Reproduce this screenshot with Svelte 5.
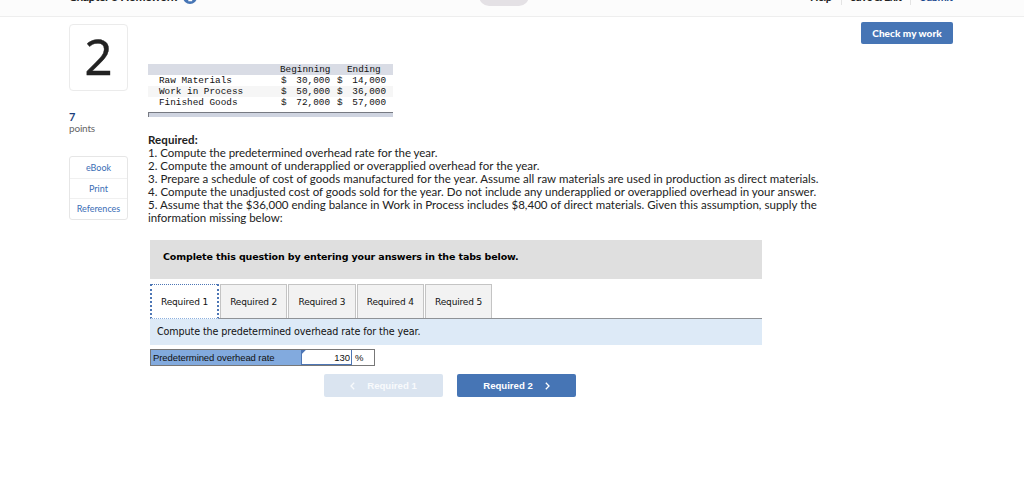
<script>
  let active = $state(0);
  let rate = $state('130');

  const inventory = [
    { name: 'Raw Materials', beginning: '30,000', ending: '14,000' },
    { name: 'Work in Process', beginning: '50,000', ending: '36,000' },
    { name: 'Finished Goods', beginning: '72,000', ending: '57,000' }
  ];

  // spacing is the tracking of each line, in px
  const requirements = [
    { text: '1. Compute the predetermined overhead rate for the year.', spacing: -0.05 },
    { text: '2. Compute the amount of underapplied or overapplied overhead for the year.', spacing: 0.01 },
    { text: '3. Prepare a schedule of cost of goods manufactured for the year. Assume all raw materials are used in production as direct materials.', spacing: 0.03 },
    { text: '4. Compute the unadjusted cost of goods sold for the year. Do not include any underapplied or overapplied overhead in your answer.', spacing: 0.02 },
    { text: '5. Assume that the $36,000 ending balance in Work in Process includes $8,400 of direct materials. Given this assumption, supply the', spacing: 0.02 },
    { text: 'information missing below:', spacing: -0.03 }
  ];

  const tabs = ['Required 1', 'Required 2', 'Required 3', 'Required 4', 'Required 5'];
</script>

<header class="topbar">
  <div class="title">
    <span>Chapter 3 Homework</span>
    <svg width="14" height="14" viewBox="0 0 14 14">
      <circle cx="7" cy="7" r="7" fill="#4675b5" />
      <path d="M5.5 6H7.5V10.5M5.3 10.5H9.2" stroke="#fff" stroke-width="1.5" fill="none" />
      <circle cx="7" cy="3.6" r="1" fill="#fff" />
    </svg>
  </div>
  <div class="pill"></div>
  <nav>
    <span>Help</span>
    <span>Save &amp; Exit</span>
    <span class="submit">Submit</span>
  </nav>
</header>

<main>
  <aside>
    <div class="number">2</div>
    <p class="score">7</p>
    <p class="points">points</p>
    <div class="links">
      <a href="#ebook">eBook</a>
      <a href="#print">Print</a>
      <a href="#references">References</a>
    </div>
  </aside>

  <section class="question">
    <div class="inventory">
      <div class="row head">
        <span></span><span>Beginning</span><span class="ending">Ending</span>
      </div>
      {#each inventory as item}
        <div class="row">
          <span class="name">{item.name}</span>
          <span class="amount"><i>$</i>{item.beginning}</span>
          <span class="amount"><i>$</i>{item.ending}</span>
        </div>
      {/each}
      <div class="rule"></div>
    </div>

    <div class="required">
      <b>Required:</b>
      {#each requirements as line}
        <div style="letter-spacing: {line.spacing}px">{line.text}</div>
      {/each}
    </div>

    <div class="work">
      <div class="banner">Complete this question by entering your answers in the tabs below.</div>
      <div class="tabs">
        {#each tabs as tab, i}
          <button class:active={active === i} onclick={() => (active = i)}>{tab}</button>
        {/each}
      </div>
      <div class="prompt">Compute the predetermined overhead rate for the year.</div>
      <div class="answer">
        <label for="rate">Predetermined overhead rate</label>
        <div class="field"><input id="rate" bind:value={rate} /></div>
        <span class="unit">%</span>
      </div>
      <div class="pager">
        <button disabled>
          <svg width="5" height="8" viewBox="0 0 5 8"><path d="M4.2 0.8L1 4L4.2 7.2" /></svg>
          <span>Required 1</span>
        </button>
        <button>
          <span>Required 2</span>
          <svg width="5" height="8" viewBox="0 0 5 8"><path d="M0.8 0.8L4 4L0.8 7.2" /></svg>
        </button>
      </div>
    </div>
  </section>

  <button class="check">Check my work</button>
</main>

<style>
  :global(body) {
    background: #fff;
    font-family: Lato, sans-serif;
    color: #222;
    overflow: hidden;
  }

  button {
    font: inherit;
    border: 0;
    padding: 0;
    white-space: nowrap;
  }

  p {
    margin: 0;
  }

  .topbar {
    box-sizing: border-box;
    height: 17px;
    background: #fcfcfc;
    border-bottom: 1px solid #eee;
    overflow: hidden;
    display: grid;
    grid-template-columns: 410px 50px 1fr;
    padding-left: 69px;
    font-size: 12px;
    line-height: 14px;
    font-weight: 700;
  }

  .title {
    display: flex;
    gap: 5px;
    margin-top: -10px;
    height: 14px;
    letter-spacing: -0.4px;
  }

  .title span {
    width: 109px;
    line-height: 13px;
    white-space: nowrap;
  }

  .pill {
    height: 20px;
    margin-top: -14px;
    border-radius: 10px;
    background: #e4e1e5;
  }

  nav {
    display: flex;
    margin: -10px 0 0 281px;
    height: 15px;
    font-size: 11px;
    line-height: 13px;
    letter-spacing: -0.4px;
  }

  nav span {
    box-sizing: border-box;
    border-right: 1px solid #e4e4e4;
    white-space: nowrap;
    padding-right: 9px;
    margin-right: 9px;
  }

  nav .submit {
    color: #1d4b8f;
    border: 0;
  }

  main {
    display: flex;
    align-items: flex-start;
    padding-left: 69px;
  }

  aside {
    width: 59px;
    margin-top: 7px;
  }

  .number {
    box-sizing: border-box;
    height: 67px;
    border: 1px solid #ebebeb;
    border-radius: 4px;
    font-family: "Noto Sans", sans-serif;
    font-size: 49px;
    line-height: 63px;
    text-align: center;
    -webkit-text-stroke: 0.4px #222;
  }

  .score {
    margin-top: 19px;
    font-size: 11px;
    line-height: 13px;
    color: #1d3f7d;
    font-weight: 700;
  }

  .points {
    font-size: 10px;
    line-height: 11px;
    letter-spacing: -0.2px;
    color: #666;
  }

  .links {
    box-sizing: border-box;
    height: 64px;
    margin-top: 22px;
    border: 1px solid #e6e6e6;
    border-radius: 3px;
    display: grid;
    grid-template-rows: 21px 20px 21px;
  }

  .links a {
    display: flex;
    align-items: center;
    justify-content: center;
    font-size: 9px;
    line-height: 10px;
    color: #3a6db5;
    text-decoration: none;
  }

  .links a + a {
    border-top: 1px solid #f0f0f0;
  }

  .question {
    width: 673px;
    padding-left: 20px;
  }

  .inventory {
    width: 245px;
    margin-top: 47px;
    font: 9.35px/12px "Liberation Mono", "Courier New", monospace;
    color: #111;
  }

  .row {
    display: grid;
    grid-template-columns: 133px 56px 56px;
    height: 11px;
    white-space: nowrap;
  }

  .head {
    background: #d9dce5;
  }

  .head span {
    margin-left: -1px;
  }

  .row:nth-child(3) {
    background: #f6f6f6;
  }

  .name {
    padding-left: 11px;
  }

  .head .ending {
    padding-left: 11px;
  }

  .amount {
    display: flex;
    justify-content: space-between;
    padding-right: 7px;
  }

  .amount i {
    font-style: normal;
  }

  .rule {
    box-sizing: border-box;
    height: 5px;
    margin-top: 4px;
    background: #cfd4e0;
    border-top: 1px solid #777a82;
    border-left: 1px solid #777a82;
  }

  .required {
    margin-top: 16px;
    font-size: 11.5px;
    line-height: 13px;
    white-space: nowrap;
  }

  .required b {
    display: block;
    letter-spacing: 0.1px;
  }

  .work {
    width: 612px;
    margin: 16px 0 0 2px;
    font-family: "DejaVu Sans", Verdana, sans-serif;
    color: #111;
  }

  .banner {
    height: 39px;
    box-sizing: border-box;
    padding: 10px 0 0 13px;
    background: #dfdfdf;
    font: bold 9.5px/13px "DejaVu Sans", Verdana, sans-serif;
    letter-spacing: -0.13px;
    color: #000;
    white-space: nowrap;
  }

  .tabs {
    display: flex;
    height: 35px;
    margin-top: 5px;
    gap: 1px;
    border-bottom: 1px solid #8f9296;
    box-sizing: border-box;
  }

  .tabs button {
    box-sizing: border-box;
    width: 67.3px;
    height: 34px;
    background: #f2f2f2;
    border: 1px solid #c4c4c4;
    border-bottom: 0;
    font-size: 9px;
    letter-spacing: -0.17px;
    color: #111;
  }

  .tabs button.active {
    width: 69px;
    height: 35px;
    background: #fff;
    border: 2px dotted #4d76b5;
    border-top-width: 1px;
    border-bottom: 1px dotted #8fb1df;
  }

  .prompt {
    height: 26px;
    padding-left: 7px;
    background: #ddeaf7;
    font-size: 9.6px;
    line-height: 26px;
    letter-spacing: -0.11px;
  }

  .answer {
    box-sizing: border-box;
    display: flex;
    width: 225px;
    height: 17px;
    margin-top: 4px;
    border: 1px solid #777;
    font: 9.5px/15px "Liberation Sans", Arial, sans-serif;
  }

  .answer label {
    width: 148px;
    padding-left: 2px;
    background: #82aade;
    letter-spacing: -0.08px;
    white-space: nowrap;
  }

  .field {
    box-sizing: border-box;
    width: 51px;
    border: 1px solid #4d76b5;
    border-top: 0;
    background: linear-gradient(135deg, #4d76b5 2.5px, #fff 3px);
  }

  input {
    display: block;
    width: 100%;
    height: 14px;
    box-sizing: border-box;
    padding: 0 1px 0 0;
    border: 0;
    outline: 0;
    background: none;
    font: inherit;
    color: inherit;
    text-align: right;
  }

  .unit {
    padding-left: 3px;
  }

  .pager {
    display: flex;
    gap: 14px;
    margin: 8px 0 0 174px;
  }

  .pager button {
    display: flex;
    align-items: center;
    justify-content: center;
    gap: 12px;
    width: 119px;
    height: 23px;
    border-radius: 2px;
    background: #4675b5;
    color: #fff;
    font: bold 9.6px "Liberation Sans", Arial, sans-serif;
  }

  .pager button:disabled {
    background: #dae4f0;
    color: #f8fafc;
  }

  .pager path {
    fill: none;
    stroke: currentColor;
    stroke-width: 1.3;
  }

  .check {
    width: 92px;
    height: 22px;
    margin: 5px 0 0 40px;
    border-radius: 2px;
    background: #4675b5;
    color: #fff;
    font-size: 10px;
    font-weight: 900;
    letter-spacing: 0.05px;
  }
</style>
